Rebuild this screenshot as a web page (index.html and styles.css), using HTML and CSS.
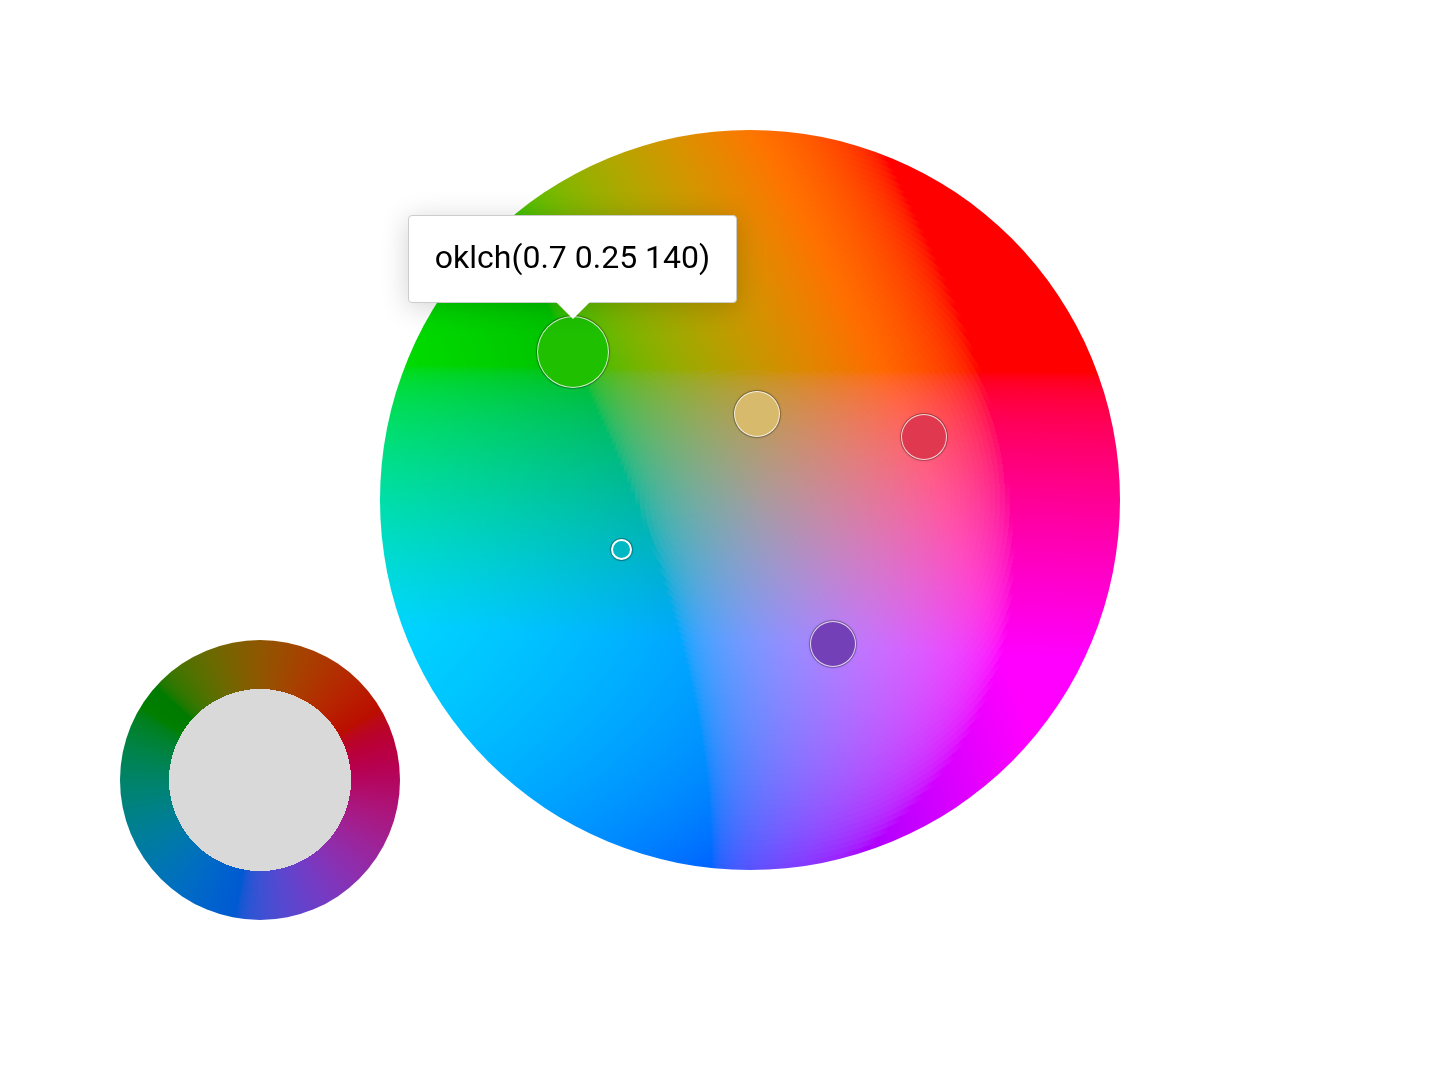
FILE: index.html
```html
<!DOCTYPE html>
<html lang="en">
<head>
<meta charset="utf-8">
<title>Color wheel</title>
<link rel="stylesheet" href="styles.css">
</head>
<body>
<main class="stage">
  <canvas class="wheel" width="740" height="740" aria-label="Hue and chroma wheel"></canvas>
  <canvas class="ring" width="280" height="280" aria-label="Lightness ring"></canvas>
  <button class="swatch gold" aria-label="Gold"></button>
  <button class="swatch red" aria-label="Red"></button>
  <button class="swatch violet" aria-label="Violet"></button>
  <button class="cursor" aria-label="Teal"></button>
  <button class="swatch active" aria-label="Green"></button>
  <div class="tip" role="tooltip">oklch(0.7 0.25 140)</div>
</main>
<script src="wheel.js"></script>
</body>
</html>
```
FILE: styles.css
```css
body { margin: 0; background: #fff; }
.stage { position: relative; min-height: 100vh; overflow: hidden; }
.wheel { position: absolute; left: 380px; top: 130px; border-radius: 50%; }
.ring { position: absolute; left: 120px; top: 640px; border-radius: 50%; }
.swatch, .cursor {
  position: absolute; box-sizing: border-box; padding: 0;
  border: 1px solid rgba(255, 255, 255, .8); border-radius: 50%;
  width: 46px; height: 46px;
  box-shadow: 0 0 0 1px rgba(0, 0, 0, .25), 0 0 3px rgba(0, 0, 0, .25);
}
.gold { left: 734px; top: 391px; background: #d8ba6c; }
.red { left: 901px; top: 414px; background: #e0384e; }
.violet { left: 810px; top: 621px; background: #7440b8; }
.active { left: 537px; top: 316px; width: 72px; height: 72px; background: #1fc000; }
.cursor { left: 611px; top: 539px; width: 21px; height: 21px; border: 2px solid #fff; background: #00b8c4; }
.tip {
  position: absolute; left: 408px; top: 215px; box-sizing: border-box;
  width: 329px; height: 88px; padding: 21px 0; text-align: center;
  background: #fff; border: 1px solid #ccc; border-radius: 4px;
  box-shadow: 0 4px 28px rgba(0, 0, 0, .18);
  font: 32px/40px Roboto, sans-serif; color: #000;
}
.tip::after {
  content: ""; position: absolute; left: 147px; top: 86px;
  border: 17px solid transparent; border-top-color: #fff; border-bottom: 0;
}
```
FILE: wheel.js
```js
function oklab(L, a, b) {
  const l = (L + 0.3963377774 * a + 0.2158037573 * b) ** 3;
  const m = (L - 0.1055613458 * a - 0.0638541728 * b) ** 3;
  const s = (L - 0.0894841775 * a - 1.291485548 * b) ** 3;
  return [
    4.0767416621 * l - 3.3077115913 * m + 0.2309699292 * s,
    -1.2684380046 * l + 2.6097574011 * m - 0.3413193965 * s,
    -0.0041960863 * l - 0.7034186147 * m + 1.707614701 * s
  ].map(v => 255 * (v <= 0 ? 0 : v >= 1 ? 1 : v <= 0.0031308 ? 12.92 * v : 1.055 * v ** (1 / 2.4) - 0.055));
}
function paint(selector, shade) {
  const canvas = document.querySelector(selector);
  const ctx = canvas.getContext('2d');
  const n = canvas.width;
  const image = ctx.createImageData(n, n);
  for (let y = 0; y < n; y++) {
    for (let x = 0; x < n; x++) {
      const [r, g, b] = shade((x + 0.5) / n * 2 - 1, 1 - (y + 0.5) / n * 2);
      image.data.set([r, g, b, 255], (y * n + x) * 4);
    }
  }
  ctx.putImageData(image, 0, 0);
}
paint('.wheel', (x, y) => {
  // Bands of constant chroma, each taking the value of its outer edge.
  const d = Math.hypot(x, y);
  const k = Math.ceil(d * 74) / 74 / d * 0.4;
  return oklab(0.7, x * k, y * k);
});
paint('.ring', (x, y) => {
  const d = Math.hypot(x, y);
  return d < 0.65 ? [217, 217, 217] : oklab(0.5, x / d * 0.2, y / d * 0.2);
});
```
